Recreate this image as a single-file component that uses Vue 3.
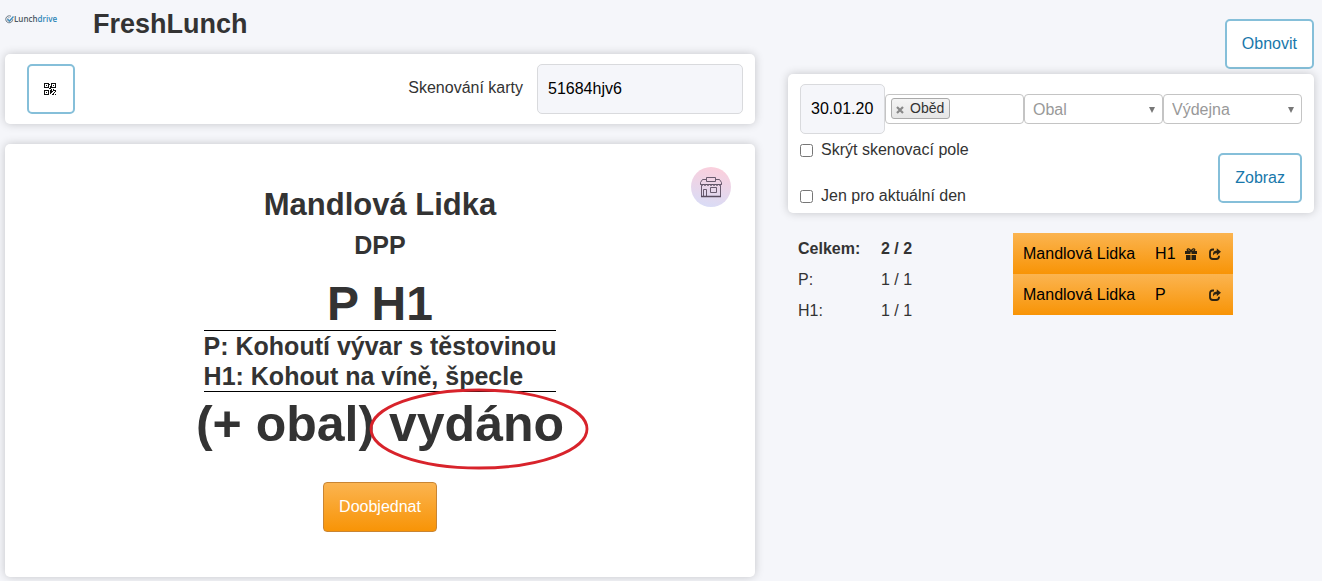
<script setup>
import { ref } from 'vue'

const cardCode = ref('51684hjv6')
const date = ref('30.01.20')
const hideScan = ref(false)
const onlyToday = ref(false)

const totals = [
  { label: 'Celkem:', value: '2 / 2', strong: true },
  { label: 'P:', value: '1 / 1' },
  { label: 'H1:', value: '1 / 1' },
]
const orders = [
  { name: 'Mandlová Lidka', meal: 'H1', gift: true },
  { name: 'Mandlová Lidka', meal: 'P', gift: false },
]
</script>

<template>
  <div class="page">
    <main class="left">
      <header class="head">
        <a class="logo" href="#" aria-label="Lunchdrive">
          <svg viewBox="0 0 18 18" width="9" height="9" aria-hidden="true">
            <path d="M15.5 8.5a7 7 0 1 1-3.5-6" fill="none" stroke="#6d7a86" stroke-width="2" />
            <path d="M12.5 9a4 4 0 1 1-3-4" fill="none" stroke="#8c98a3" stroke-width="1.2" />
            <path d="M5 8l4 4 8-9" fill="none" stroke="#3f8fc0" stroke-width="2.6" />
          </svg>
          <span class="brand">Lunch<span class="brand-blue">drive</span></span>
        </a>
        <h1>FreshLunch</h1>
      </header>

      <section class="card scan">
        <button class="btn qr" type="button" aria-label="QR">
          <svg viewBox="0 0 12 12" width="12" height="12" shape-rendering="crispEdges" aria-hidden="true">
            <path fill="#111" fill-rule="evenodd" d="M0 0h5v5H0zM1 1v3h3V1zM7 0h5v5H7zM8 1v3h3V1zM0 7h5v5H0zM1 8v3h3V8z" />
            <path fill="#111" d="M2 2h1v1H2zM9 2h1v1H9zM2 9h1v1H2zM5 1h1v1H5zM5 5h2v1H5zM6 3h1v2H6zM6 7h2v1h1v1H8v1H7v1H6zM9 6h1v1h2v2h-1V8H9zM10 9h1v1h-1zM8 11h2v1H8zM11 11h1v1h-1zM7 6h1v1H7zM9 10h1v1H9z" />
          </svg>
        </button>
        <label for="card-code">Skenování karty</label>
        <input id="card-code" v-model="cardCode" class="field code" type="text" />
      </section>

      <section class="card result">
        <svg class="shop" viewBox="0 0 40 40" width="40" height="40" aria-hidden="true">
          <defs>
            <linearGradient id="shop-bg" x1="0.6" y1="0" x2="0.4" y2="1">
              <stop offset="0" stop-color="#fbcfdc" />
              <stop offset="1" stop-color="#d9dcf6" />
            </linearGradient>
          </defs>
          <circle cx="20" cy="20" r="20" fill="url(#shop-bg)" />
          <g fill="none" stroke="#5a4d60" stroke-width="0.9">
            <path d="M15 12.500H11.500L9.500 15.500V17.500H30.500V15.500L28.500 12.500H25" />
            <path d="M15.500 10.500h9v4h-9z" />
            <path d="M9.500 17.500q1.500 2.800 3 0q1.500 2.800 3 0q1.500 2.800 3 0q1.500 2.800 3 0q1.500 2.800 3 0q1.500 2.800 3 0q1.500 2.800 3 0" stroke-width="0.7" />
            <path d="M10.500 18.500V29.500H29.500V18.500M12.500 29V22.500h3V29M19.500 20.500h6v5h-6z" />
            <path d="M10 29.500h20" stroke-width="1.500" />
          </g>
        </svg>

        <h2 class="person">Mandlová Lidka</h2>
        <p class="group">DPP</p>
        <p class="big codes">P H1</p>
        <div class="meals">
          <div>P: Kohoutí vývar s těstovinou</div>
          <div>H1: Kohout na víně, špecle</div>
        </div>
        <p class="big">
          (+ obal)
          <span class="status">vydáno<svg class="ring" viewBox="0 0 220 82" preserveAspectRatio="none" aria-hidden="true">
            <ellipse cx="110" cy="41" rx="108" ry="39" fill="none" stroke="#d8232b" stroke-width="2.800" />
          </svg></span>
        </p>
        <button class="reorder" type="button">Doobjednat</button>
      </section>
    </main>

    <aside class="right">
      <button class="btn refresh" type="button">Obnovit</button>

      <form class="card filter" @submit.prevent>
        <div class="filter-row">
          <input v-model="date" class="field date" type="text" aria-label="Datum" />
          <div class="selects">
            <div class="multi">
              <span class="tag">
                <button type="button" aria-label="Odebrat Oběd">
                  <svg viewBox="0 0 8 8" width="8" height="8" aria-hidden="true">
                    <path d="M1 1l6 6M7 1l-6 6" stroke="#888" stroke-width="2.200" />
                  </svg>
                </button>
                Oběd
              </span>
            </div>
            <div class="select">
              <select aria-label="Obal"><option>Obal</option></select>
            </div>
            <div class="select">
              <select aria-label="Výdejna"><option>Výdejna</option></select>
            </div>
          </div>
        </div>
        <div class="filter-bottom">
          <div class="checks">
            <label><input v-model="hideScan" type="checkbox" />Skrýt skenovací pole</label>
            <label><input v-model="onlyToday" type="checkbox" />Jen pro aktuální den</label>
          </div>
          <button class="btn" type="submit">Zobraz</button>
        </div>
      </form>

      <div class="lists">
        <table class="totals">
          <tbody>
            <tr v-for="t in totals" :key="t.label" :class="{ strong: t.strong }">
              <td>{{ t.label }}</td>
              <td>{{ t.value }}</td>
            </tr>
          </tbody>
        </table>

        <table class="orders">
          <tbody>
            <tr v-for="o in orders" :key="o.meal">
              <td class="name">{{ o.name }}</td>
              <td class="meal">{{ o.meal }}</td>
              <td class="icon">
                <svg v-if="o.gift" viewBox="0 0 12 12" width="12" height="12" aria-hidden="true">
                  <path fill="#2b2211" d="M0 3h5.500v3H0zM6.500 3H12v3H6.500zM1 7h4.500v5H1zM6.500 7H11v5H6.500z" />
                  <path fill="none" stroke="#2b2211" stroke-width="1.200" d="M6 3.400C5 .4 2.200.2 2.200 1.800C2.200 3 4 3.400 6 3.400C8 3.400 9.800 3 9.800 1.800C9.800.2 7 .4 6 3.400z" />
                </svg>
              </td>
              <td class="icon">
                <svg viewBox="0 0 12 12" width="12" height="12" aria-hidden="true">
                  <path fill="none" stroke="#2b2211" stroke-width="1.800" d="M5 1.500H3.800Q1 1.500 1 4.200V8.300Q1 11 3.800 11H7.200Q10 11 10 8.300V7.800" />
                  <path fill="#2b2211" d="M7.800 0.300L12 3.800L7.800 7.300V5Q5 5 4.200 7.500Q3.200 2.700 7.800 2.500z" />
                </svg>
              </td>
            </tr>
          </tbody>
        </table>
      </div>
    </aside>
  </div>
</template>

<style>
body {
  margin: 0;
  background: #f5f6fa;
}
</style>

<style scoped>
.page {
  display: grid;
  grid-template-columns: 750fr 526fr;
  gap: 33px;
  padding: 0 8px 4px 5px;
  color: #333;
  font: 16px/20px "Liberation Sans", Arial, sans-serif;
}
* {
  box-sizing: border-box;
}
button,
input,
select {
  margin: 0;
  font: inherit;
}
h1,
h2,
p {
  margin: 0;
}
.card {
  background: #fff;
  border-radius: 5px;
  box-shadow: 0 0 10px rgba(0, 0, 0, 0.2);
}
.head {
  display: flex;
  align-items: flex-start;
  height: 54px;
}
.logo {
  display: flex;
  align-items: center;
  width: 88px;
  padding-top: 14px;
  color: #4d5760;
  text-decoration: none;
}
.brand {
  font: 600 8px/10px "Open Sans", sans-serif;
}
.brand-blue {
  color: #2f86b8;
}
h1 {
  padding-top: 4px;
  font-size: 27px;
  line-height: 40px;
}
.scan {
  display: flex;
  align-items: center;
  padding: 10px 12px 10px 22px;
}
.scan label {
  margin: 0 14px 2px auto;
}
.btn {
  height: 50px;
  padding: 0 15px;
  border: 2px solid #85bfd9;
  border-radius: 5px;
  background: #fff;
  color: #1878ab;
}
.qr {
  display: grid;
  place-items: center;
  width: 48px;
  padding: 0 2px 0 0;
}
.field {
  height: 50px;
  border: 1px solid #d9dadd;
  border-radius: 5px;
  background: #f5f6fa;
  color: #000;
}
.code {
  width: 206px;
  padding: 0 10px;
}
.result {
  position: relative;
  display: flex;
  flex-direction: column;
  align-items: center;
  margin-top: 20px;
  padding: 41px 20px 45px;
}
.shop {
  position: absolute;
  top: 23px;
  right: 24px;
}
.person {
  font-size: 31px;
  line-height: 40px;
}
.group {
  font-weight: bold;
  font-size: 25px;
  line-height: 40px;
}
.big {
  padding-top: 6px;
  font-weight: bold;
  font-size: 50px;
  line-height: 52px;
}
.codes {
  padding-top: 13px;
  font-size: 48px;
}
.meals {
  border: solid #000;
  border-width: 1px 0;
  font-weight: bold;
  font-size: 25px;
  line-height: 30px;
}
.status {
  position: relative;
}
.ring {
  position: absolute;
  top: -8px;
  left: -20px;
  width: 220px;
  height: 82px;
}
.reorder {
  height: 50px;
  margin-top: 32px;
  padding: 0 15px;
  border: 1px solid #c98533;
  border-radius: 4px;
  background: linear-gradient(#fbb450, #f89406);
  color: #fff;
}
.right {
  display: flex;
  flex-direction: column;
  padding-top: 19px;
}
.refresh {
  align-self: flex-end;
}
.filter {
  margin-top: 5px;
  padding: 10px 12px;
}
.filter-row {
  display: flex;
  align-items: center;
}
.date {
  width: 85px;
  padding: 0 10px;
}
.selects {
  display: grid;
  flex: 1;
  grid-template-columns: repeat(3, 1fr);
}
.multi,
.select {
  position: relative;
  height: 30px;
  border: 1px solid #c4c4c4;
  border-radius: 4px;
}
.multi {
  padding: 3px 5px;
}
.tag {
  display: inline-flex;
  align-items: center;
  gap: 6px;
  height: 21px;
  padding: 0 5px 0 4px;
  border: 1px solid #aaa;
  border-radius: 3px;
  background: linear-gradient(#f4f4f4, #e6e6e6);
  font-size: 14px;
  line-height: 19px;
}
.tag button {
  display: flex;
  padding: 2px 0 0;
  border: 0;
  background: none;
}
.select select {
  width: 100%;
  height: 28px;
  padding: 2px 8px 0;
  border: 0;
  background: none;
  color: #999;
  appearance: none;
}
.select::after {
  position: absolute;
  top: 12px;
  right: 7px;
  border: solid transparent;
  border-width: 6px 3px 0;
  border-top-color: #777;
  content: "";
  pointer-events: none;
}
.filter-bottom {
  display: flex;
  align-items: flex-end;
  justify-content: space-between;
}
.checks {
  display: flex;
  flex-direction: column;
  gap: 32px;
  padding-top: 9px;
}
.checks label {
  display: flex;
  align-items: center;
  gap: 8px;
  line-height: 14px;
}
.checks input {
  width: 13px;
  height: 13px;
}
.lists {
  display: flex;
  align-items: flex-start;
  padding: 20px 10px;
}
table {
  border-collapse: collapse;
}
td {
  padding: 0;
}
.totals {
  width: 215px;
}
.totals td {
  height: 31px;
}
.totals td:first-child {
  width: 83px;
}
.strong {
  font-weight: bold;
}
.orders {
  color: #000;
}
.orders tr {
  height: 41px;
  background: linear-gradient(#fbb450, #f89406);
}
.name {
  padding: 0 10px;
}
.meal {
  width: 40px;
  padding-left: 10px;
}
.icon {
  width: 24px;
}
.icon svg {
  display: block;
}
</style>
